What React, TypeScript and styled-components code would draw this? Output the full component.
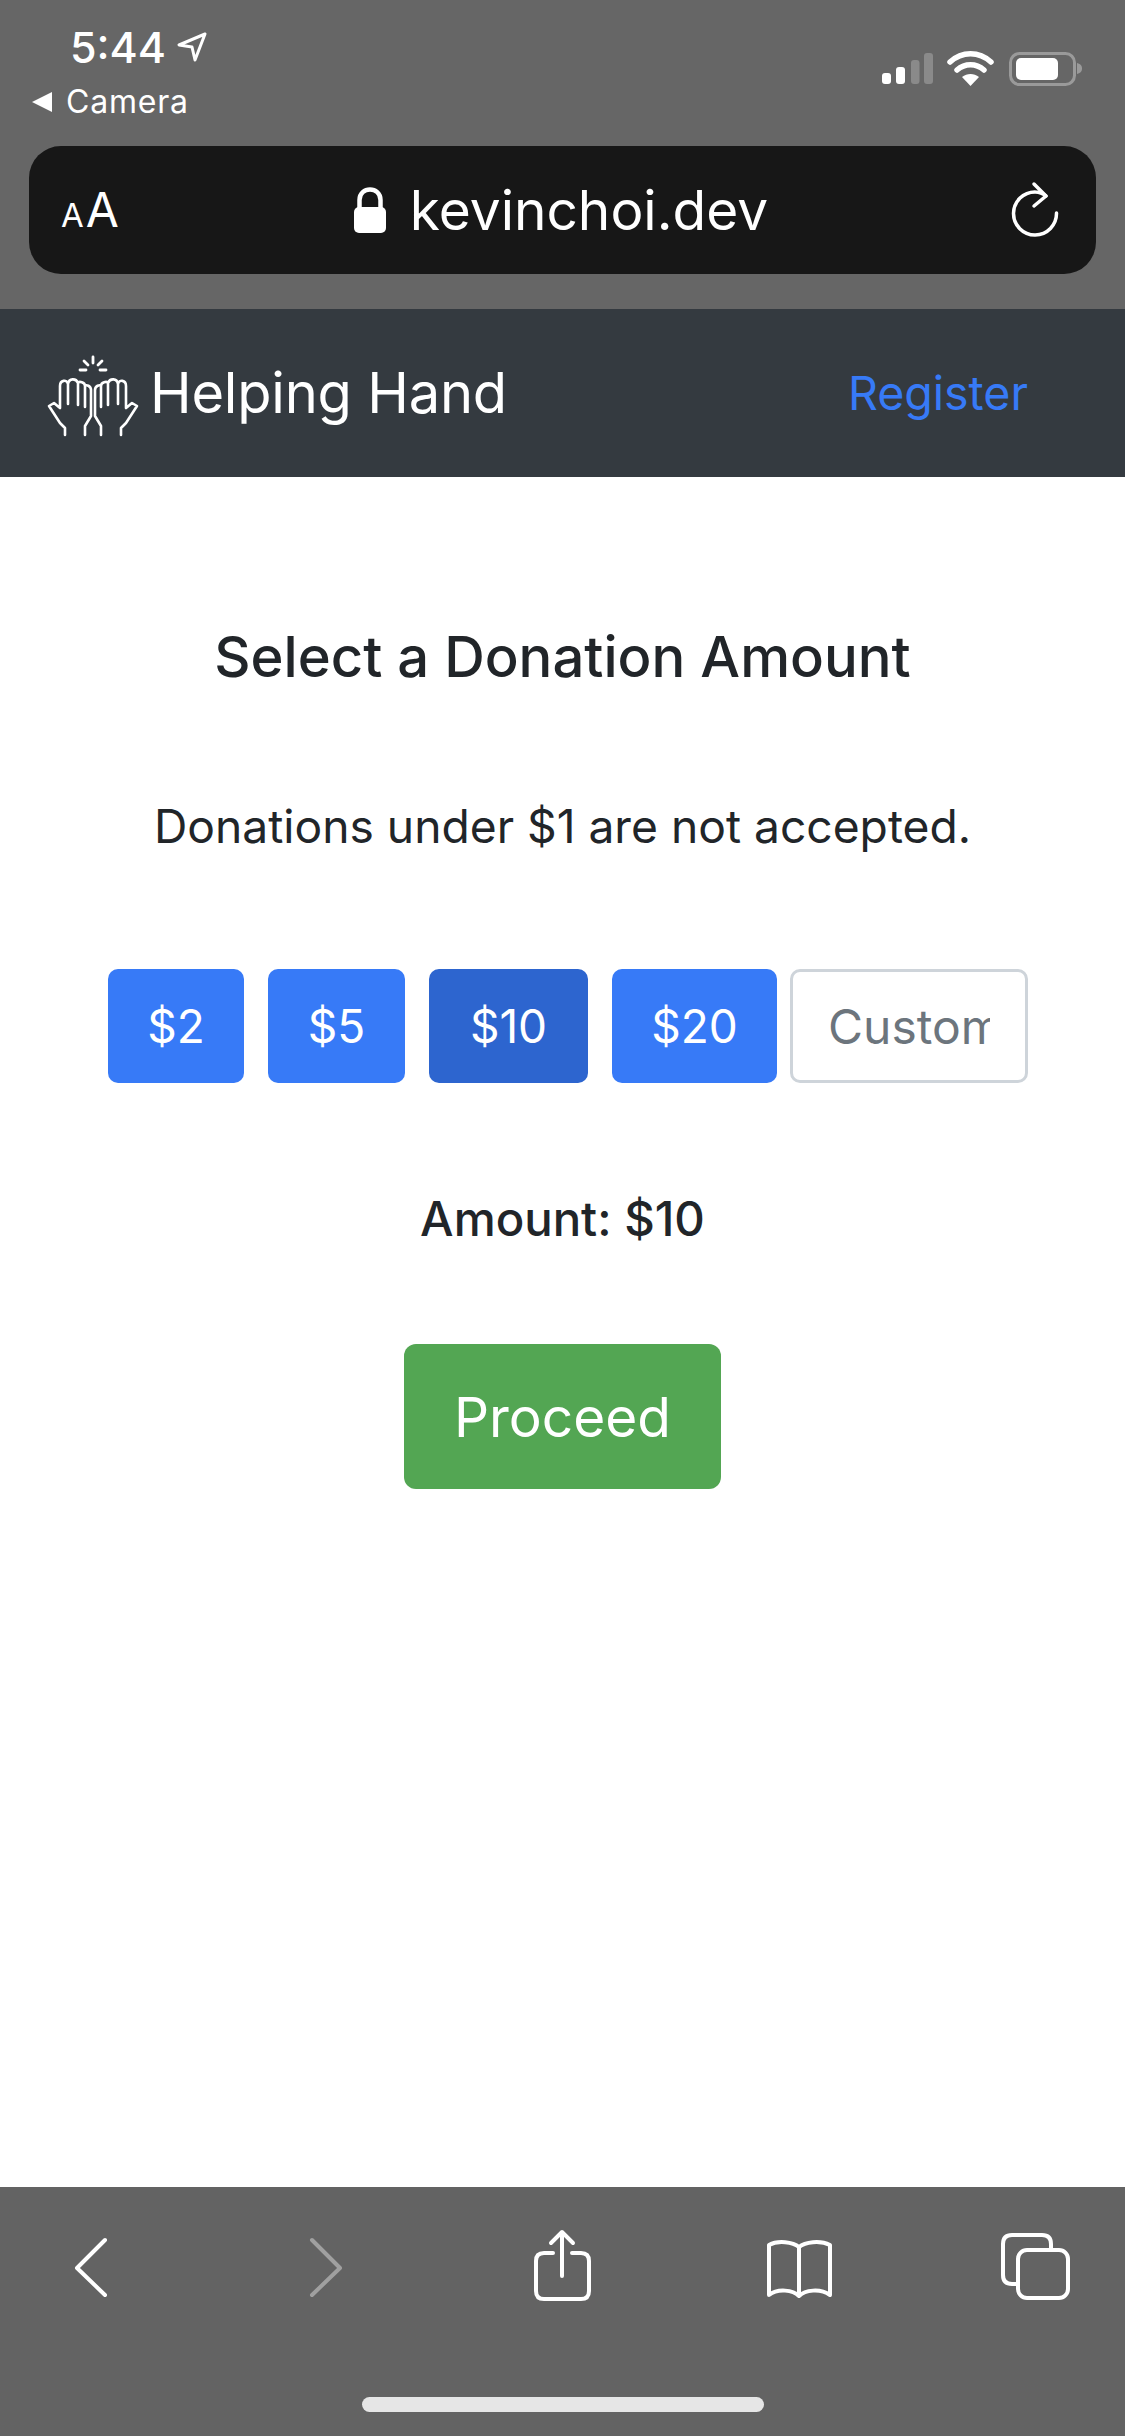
import React from "react";
import styled, { createGlobalStyle } from "styled-components";

const Global = createGlobalStyle`
  html, body { margin: 0; padding: 0; background: #fff; }
  body { font-family: Inter, "Noto Sans", "Liberation Sans", sans-serif; color: #212529; }
  * { box-sizing: border-box; }
`;

const Page = styled.div`
  width: 1125px;
  height: 2436px;
  display: flex;
  flex-direction: column;
  overflow: hidden;
`;

const TopChrome = styled.header`
  height: 309px;
  background: #666666;
  color: #fff;
  padding: 0 30px 0 29px;
`;

const StatusRow = styled.div`
  height: 146px;
  display: flex;
  justify-content: space-between;
  align-items: flex-start;
`;

const StatusLeft = styled.div`
  display: flex;
  flex-direction: column;
`;

const TimeRow = styled.div`
  display: flex;
  align-items: center;
  gap: 11px;
  margin: 22px 0 0 41px;
  height: 50px;
  font-size: 43px;
  font-weight: 500;
  line-height: 50px;
`;

const BackRow = styled.div`
  display: flex;
  align-items: center;
  gap: 14px;
  margin: 12px 0 0 3px;
  height: 36px;
  font-size: 32px;
  font-weight: 400;
  line-height: 36px;
  letter-spacing: 0.8px;
`;

const StatusIcons = styled.svg`
  display: block;
  margin: 50px 10px 0 0;
`;

const UrlBar = styled.div`
  height: 128px;
  width: 1067px;
  border-radius: 32px;
  background: #171717;
  display: flex;
  align-items: center;
  justify-content: space-between;
  padding: 0 36px 0 32px;
`;

const TextSize = styled.div`
  display: flex;
  align-items: baseline;
  font-weight: 400;
  line-height: 1;
`;

const SmallA = styled.span`
  font-size: 33px;
  margin-right: 2px;
`;

const BigA = styled.span`
  font-size: 48px;
`;

const Address = styled.div`
  display: flex;
  align-items: center;
  gap: 24px;
  margin-right: 7px;
  font-size: 55px;
  font-weight: 400;
  line-height: 1;
`;

const Nav = styled.nav`
  height: 168px;
  background: #343a40;
  display: flex;
  align-items: center;
  justify-content: space-between;
  padding: 0 97px 0 40px;
`;

const Brand = styled.div`
  display: flex;
  align-items: center;
  color: #fff;
  font-size: 56px;
  font-weight: 400;
  letter-spacing: -0.2px;
`;

const BrandIcon = styled.svg`
  display: block;
`;

const RegisterLink = styled.a`
  color: #377af7;
  font-size: 46.500px;
  font-weight: 400;
`;

const Main = styled.main`
  flex: 1;
  background: #fff;
  display: flex;
  flex-direction: column;
  align-items: center;
  padding-top: 147px;
`;

const Title = styled.h2`
  margin: 0;
  font-size: 56.200px;
  line-height: 66px;
  font-weight: 500;
`;

const Note = styled.p`
  margin: 100px 0 0;
  font-size: 46.200px;
  line-height: 72px;
  font-weight: 400;
`;

const AmountRow = styled.div`
  align-self: stretch;
  display: flex;
  gap: 24px;
  margin-top: 107px;
  padding-left: 108px;
`;

const AmountButton = styled.button<{ $active?: boolean; $width: number }>`
  width: ${(p) => p.$width}px;
  height: 114px;
  padding: 0;
  border: 0;
  border-radius: 10px;
  background: ${(p) => (p.$active ? "#2d65cf" : "#377af7")};
  color: #fff;
  font-family: inherit;
  font-size: 46px;
  font-weight: 400;
`;

const CustomInput = styled.input`
  width: 238px;
  height: 114px;
  margin-left: -11px;
  padding: 0 35px 0 35px;
  border: 3px solid #ced4da;
  border-radius: 10px;
  background: #fff;
  font-family: inherit;
  font-size: 48px;
  color: #6c757d;
  &::placeholder { color: #6c757d; opacity: 1; }
`;

const AmountText = styled.div`
  margin-top: 108px;
  font-size: 47.300px;
  line-height: 55px;
  font-weight: 500;
`;

const ProceedButton = styled.button`
  margin-top: 98px;
  width: 317px;
  height: 145px;
  border: 0;
  border-radius: 12px;
  background: #53a653;
  color: #fff;
  font-family: inherit;
  font-size: 55px;
  font-weight: 400;
`;

const BottomChrome = styled.footer`
  height: 249px;
  background: #636363;
  display: flex;
  flex-direction: column;
  align-items: center;
  padding-top: 33px;
`;

const ToolRow = styled.div`
  align-self: stretch;
  display: grid;
  grid-template-columns: repeat(5, 236px);
  padding-left: 30px;
`;

const ToolIcon = styled.svg`
  display: block;
  fill: none;
  stroke: ${(p) => p.color || "#fff"};
  stroke-width: 4;
  stroke-linecap: round;
  stroke-linejoin: round;
`;

const HomeBar = styled.div`
  width: 402px;
  height: 15px;
  margin-top: 87px;
  border-radius: 8px;
  background: #e6e6e6;
`;

const Tool = ({ children, color }: { children: React.ReactNode; color?: string }) => (
  <ToolIcon width={120} height={90} viewBox="0 0 120 90" color={color}>
    {children}
  </ToolIcon>
);

const handLeft =
  "M25 87 V80 L20 75 L9 58 L14 55 L20 60 V38 C20 32 27 31 28 36 C29 30 36 30 38 35 C39 33 45 34 45 38 C46 36 51 38 51 42 V68 L45 78 V87 M28 36 V56 M38 35 V57 M45 38 V59";

const App = () => (
  <Page>
    <Global />
    <TopChrome>
      <StatusRow>
        <StatusLeft>
          <TimeRow>
            5:44
            <svg width="30" height="30" viewBox="0 0 30 30" fill="none" stroke="#fff" strokeWidth="3" strokeLinejoin="round">
              <path d="M28 2 L2 13 L15 15 L18 28 Z" />
            </svg>
          </TimeRow>
          <BackRow>
            <svg width="20" height="20" viewBox="0 0 20 20" fill="#fff">
              <path d="M0 10 L20 0 V20 Z" />
            </svg>
            Camera
          </BackRow>
        </StatusLeft>
        <StatusIcons width="205" height="38" viewBox="880 50 205 38" fill="#fff">
          <rect x="882" y="73" width="9" height="11" rx="3" />
          <rect x="896" y="67" width="9" height="17" rx="3" />
          <rect x="911" y="60" width="8.500" height="24" rx="3" fill="#8a8a8a" />
          <rect x="924" y="53" width="9" height="31" rx="3" fill="#8a8a8a" />
          <path d="M950 62 C962 51 979 51 991 62 M957 70 C965 63 976 63 984 70" fill="none" stroke="#fff" strokeWidth="5.500" strokeLinecap="round" />
          <path d="M970.500 86 L962 77 C967 73 974 73 979 77 Z" />
          <rect x="1010.500" y="53.500" width="64" height="31" rx="9" fill="none" stroke="#9a9a9a" strokeWidth="3" />
          <rect x="1016" y="58" width="42" height="22" rx="5" />
          <path d="M1077 63 C1081 64 1082 66 1082 68.500 C1082 71 1081 73 1077 74 Z" fill="#9a9a9a" />
        </StatusIcons>
      </StatusRow>
      <UrlBar>
        <TextSize>
          <SmallA>A</SmallA>
          <BigA>A</BigA>
        </TextSize>
        <Address>
          <svg width="32" height="46" viewBox="0 0 32 46" fill="none">
            <path d="M5.500 22 V13 C5.500 -1 26.500 -1 26.500 13 V22" stroke="#fff" strokeWidth="4.500" />
            <rect x="0" y="20" width="32" height="26" rx="5" fill="#fff" />
          </svg>
          kevinchoi.dev
        </Address>
        <svg width="50" height="60" viewBox="0 0 50 60" fill="none" stroke="#fff" strokeWidth="3.500" strokeLinecap="round" strokeLinejoin="round">
          <path d="M46.500 33 A21.500 21.500 0 1 1 25.500 12 Q31 12 36 16" />
          <path d="M24 4 L36 16 L24 26" />
        </svg>
      </UrlBar>
    </TopChrome>
    <Nav>
      <Brand>
        <BrandIcon width="110" height="90" viewBox="0 0 110 90" fill="none" stroke="#fff" strokeWidth="2.600" strokeLinecap="round" strokeLinejoin="round">
          <path d={handLeft} />
          <path d={handLeft} transform="translate(106 0) scale(-1 1)" />
          <path d="M53 9 V15 M44 13 L48 17 M62 13 L58 17 M40 22 H46 M60 22 H66" strokeWidth="2.800" />
        </BrandIcon>
        Helping Hand
      </Brand>
      <RegisterLink>Register</RegisterLink>
    </Nav>
    <Main>
      <Title>Select a Donation Amount</Title>
      <Note>Donations under $1 are not accepted.</Note>
      <AmountRow>
        <AmountButton $width={136}>$2</AmountButton>
        <AmountButton $width={137}>$5</AmountButton>
        <AmountButton $width={159} $active>$10</AmountButton>
        <AmountButton $width={165}>$20</AmountButton>
        <CustomInput placeholder="Custom" readOnly />
      </AmountRow>
      <AmountText>Amount: $10</AmountText>
      <ProceedButton>Proceed</ProceedButton>
    </Main>
    <BottomChrome>
      <ToolRow>
        <Tool>
          <path d="M75 20 L47 48 L75 75" />
        </Tool>
        <Tool color="#a0a0a0">
          <path d="M46 20 L74 48 L46 75" />
        </Tool>
        <Tool>
          <path d="M51 33 H42 Q34 33 34 41 V71 Q34 79 42 79 H79 Q87 79 87 71 V41 Q87 33 79 33 H70" />
          <path d="M60 56 V12 M49 23 L60 12 L71 23" />
        </Tool>
        <Tool>
          <path d="M61 27 C55 22 40 20 31 25 V75 C40 68 55 70 61 76 C67 70 82 68 92 75 V25 C82 20 67 22 61 27 Z M61 27 V76" />
        </Tool>
        <Tool>
          <rect x="44" y="30" width="50" height="48" rx="9" />
          <path d="M42 64 H38 Q29 64 29 55 V24 Q29 15 38 15 H68 Q77 15 77 24 V30" />
        </Tool>
      </ToolRow>
      <HomeBar />
    </BottomChrome>
  </Page>
);

export default App;
